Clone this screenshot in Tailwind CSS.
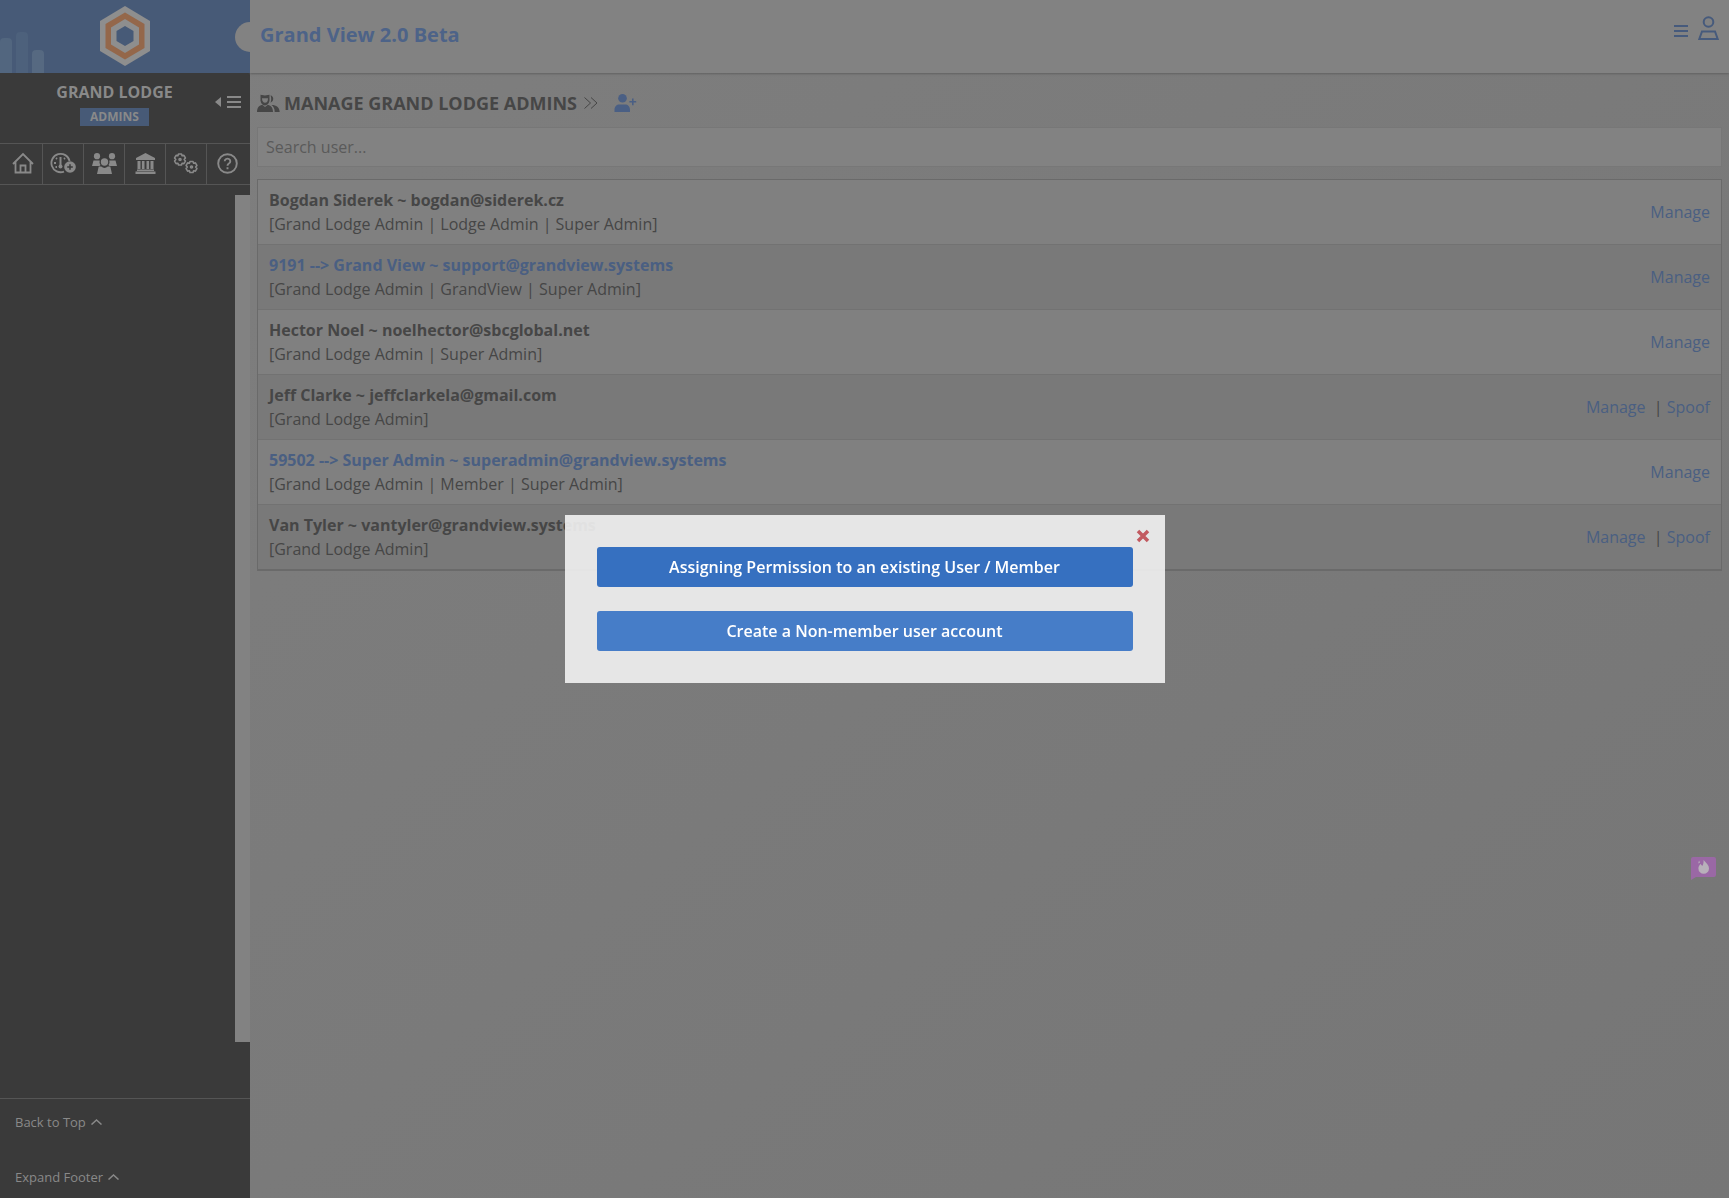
<!DOCTYPE html>
<html lang="en">
<head>
<meta charset="utf-8">
<title>Grand View 2.0 Beta</title>
<script src="https://cdn.jsdelivr.net/npm/@tailwindcss/browser@4"></script>
</head>
<body class="bg-[#7b7b7b] font-['Open_Sans',sans-serif] text-base text-[#464646]">
<div class="flex min-h-screen">
  <aside class="flex w-[250px] shrink-0 flex-col bg-[#3a3a3a] text-[#898989]">
    <div class="relative flex h-[73px] justify-center overflow-hidden bg-[#475a77] pt-[6px]">
      <div class="absolute bottom-0 left-0 flex items-end gap-1" aria-hidden="true">
        <span class="h-[35px] w-3 rounded-t bg-[#52667f]"></span>
        <span class="h-[41px] w-3 rounded-t bg-[#4d617c]"></span>
        <span class="h-[23px] w-3 rounded-t bg-[#566981]"></span>
      </div>
      <svg class="h-[60px] w-[50px]" viewBox="0 0 50 60" fill="none" aria-label="Grand View logo">
        <path d="M25 0 50 15v30L25 60 0 45V15z" fill="#8e8e8e"/>
        <path d="M25 6.500 44.500 18v24L25 53.500 5.500 42V18z" fill="#94674a"/>
        <path d="M25 13 39 21.500v17L25 47 11 38.500v-17z" fill="#8e8e8e"/>
        <path d="M25 20 33.500 25v10L25 40 16.500 35V25z" fill="#475a77"/>
      </svg>
      <span class="absolute top-[22px] -right-[15px] size-[30px] rounded-full bg-[#828282]"></span>
    </div>
    <div class="flex h-[70px] items-center">
      <div class="flex flex-1 flex-col items-center gap-1 pr-0.5 pb-[10px]">
        <p class="leading-6 font-bold">GRAND LODGE</p>
        <p class="bg-[#475a77] px-[10px] text-xs leading-[18px] font-bold">ADMINS</p>
      </div>
      <button class="mr-[9px] mb-3 -ml-4 flex items-center gap-[6px]" aria-label="Collapse menu">
        <svg class="h-[10px] w-[6px]" viewBox="0 0 6 10"><path d="M6 0v10L0 5z" fill="currentColor"/></svg>
        <svg class="h-3 w-[14px]" viewBox="0 0 14 12"><path d="M0 1h14M0 6h14M0 11h14" stroke="currentColor" stroke-width="2"/></svg>
      </button>
    </div>
    <nav class="grid grid-cols-[42px_40px_40px_40px_40px_1fr] gap-px border-y border-[#555] bg-[#555] *:flex *:h-10 *:items-center *:justify-center *:bg-[#3a3a3a] *:pb-0.5">
      <a href="#" aria-label="Home"><svg class="ml-[3px] size-[22px]" viewBox="0 0 22 22" fill="none" stroke="currentColor" stroke-width="1.800"><path d="M1 12 11 2l10 10M3.500 10v10.500h15V10M8.500 20v-6.500h5V20"/></svg></a>
      <a href="#" aria-label="Dashboard"><svg class="h-[22px] w-[26px]" viewBox="0 0 26 22" fill="none" stroke="currentColor" stroke-width="1.800"><path d="M14 19.600A9.200 9.200 0 1 1 19.600 9"/><path d="M10.500 5v8" stroke-width="2"/><circle cx="10.500" cy="14.500" r="2" fill="currentColor" stroke="none"/><path d="M4 11h2M6 6l1 1M15 6l-1 1M5.500 15h1.500" stroke-width="1.800"/><circle cx="20" cy="15" r="5.800" fill="currentColor" stroke="none"/><path d="M20 12.200v5.600M17.200 15h5.600" stroke="#3a3a3a" stroke-width="1.500"/></svg></a>
      <a href="#" aria-label="Members"><svg class="h-[21px] w-[25px]" viewBox="0 0 25 21" fill="currentColor"><circle cx="5" cy="3.200" r="3.100"/><circle cx="20" cy="3.200" r="3.100"/><circle cx="12.500" cy="9" r="3.700"/><path d="M0 13 1.500 7.500h6.200a5 5 0 0 0 .8 4.500l-1 1zM25 13 23.500 7.500h-6.200a5 5 0 0 1-.8 4.500l1 1zM5 21l1.700-7.500h2.500a5 5 0 0 0 6.600 0h2.500L20 21z"/></svg></a>
      <a href="#" aria-label="Lodge"><svg class="size-[21px]" viewBox="0 0 21 21" fill="currentColor"><path d="M10.500 0 20 5v2H1V5zM2.500 8h3v8h-3zM6.900 8h2.600v8H6.900zM11.500 8h2.600v8h-2.600zM15.500 8h3v8h-3zM2 16.500h17V18H2zM.5 18.500h20V21H.5z"/></svg></a>
      <a href="#" aria-label="Settings"><svg class="h-[21px] w-[26px]" viewBox="0 0 26 21" fill="none" stroke="currentColor" stroke-width="1.600" stroke-linejoin="round"><path id="gear" d="M5.500 1h3l.6 1.700 1.800-.3 1.500 2.500L11.200 6.500l1.200 1.600-1.500 2.500-1.800-.3L8.500 12h-3l-.6-1.700-1.800.3L1.600 8.100l1.200-1.600L1.600 4.900l1.500-2.500 1.800.3z"/><circle cx="7" cy="6.500" r="1"/><use href="#gear" x="11.500" y="7.500"/><circle cx="18.500" cy="14" r="1"/></svg></a>
      <a href="#" aria-label="Help"><svg class="mr-[2px] size-[21px]" viewBox="0 0 21 21" fill="none" stroke="currentColor" stroke-width="1.900"><circle cx="10.500" cy="10.500" r="9.300"/><path d="M7.700 8.200a2.800 2.600 0 1 1 4.200 2.300c-1 .6-1.400 1-1.400 2.200M10.500 14.300v2"/></svg></a>
    </nav>
    <div class="mt-[10px] mb-[56px] w-[15px] flex-1 self-end bg-[#828282]"></div>
    <footer class="flex flex-col gap-[31px] border-t border-[#555] px-[15px] pt-[11px] pb-[9px] text-[13px] leading-6">
      <a href="#" class="flex items-center gap-[5px]">Back to Top <svg class="h-[6px] w-[11px]" viewBox="0 0 11 6" fill="none" stroke="currentColor" stroke-width="1.500"><path d="M.5 5.500 5.500 1l5 4.500"/></svg></a>
      <a href="#" class="flex items-center gap-[5px]">Expand Footer <svg class="h-[6px] w-[11px]" viewBox="0 0 11 6" fill="none" stroke="currentColor" stroke-width="1.500"><path d="M.5 5.500 5.500 1l5 4.500"/></svg></a>
    </footer>
  </aside>

  <div class="flex min-w-0 flex-1 flex-col bg-linear-to-br from-[#7e7e7e] to-[#767676]">
    <header class="flex h-[73px] items-start justify-between bg-[#828282] px-[10px] text-[#465a7c] shadow-[0_1px_2px_#606060]">
      <h1 class="mt-[21px] text-xl leading-7 font-bold text-[#4d6388]">Grand View 2.0 Beta</h1>
      <div class="mt-4 flex items-center gap-[10px]">
        <button aria-label="Menu"><svg class="mt-[6px] h-3 w-[14px]" viewBox="0 0 14 12"><path d="M0 1h14M0 6h14M0 11h14" stroke="currentColor" stroke-width="2"/></svg></button>
        <button aria-label="Account"><svg class="h-6 w-[21px]" viewBox="0 0 21 24" fill="none" stroke="currentColor" stroke-width="2"><circle cx="10.500" cy="6" r="4.800"/><path d="M4 15.500h13l2.700 7.500H1.300z"/></svg></button>
      </div>
    </header>
    <main class="px-[7px] pt-[18px]">
      <div class="flex h-6 items-center">
        <svg class="h-[19px] w-[23px]" viewBox="0 0 23 19" fill="#464646"><path d="M3.500.8 8 1.500l4.500-.7v4a4.500 5.500 0 0 1-9 2z"/><path d="M5 4.200h6c0 3-1.200 4.500-3 4.500S5 7 5 4.200z" fill="#7d7d7d"/><path d="M0 18c0-4.500 2.500-7 5.500-7L8 13l2.500-2c3 0 5.500 2.500 5.500 7zM13.500 1.200a4 4 0 0 1 0 7.600c.9-2.500.9-5 0-7.600zM14.500 11c5 0 8 2.500 8.200 7h-5c0-3-1-5.500-3.200-7z"/></svg>
        <h2 class="ml-1 text-lg leading-6 font-bold">MANAGE GRAND LODGE ADMINS</h2>
        <svg class="ml-[7px] h-3 w-[14px]" viewBox="0 0 14 12" fill="none" stroke="#464646"><path d="M.5.500 6.500 6l-6 5.500M7 .5 13 6l-6 5.500"/></svg>
        <button class="ml-4" aria-label="Add admin"><svg class="h-[18px] w-[23px]" viewBox="0 0 23 18" fill="#4a5f84"><circle cx="8.500" cy="4.300" r="4.300"/><path d="M.5 18v-2c0-3.500 2-5.500 5-5.500h5.500c3 0 5 2 5 5.500v2zM18 4.500h1.600V7h2.600v1.600h-2.600v2.600H18V8.600h-2.600V7H18z"/></svg></button>
      </div>
      <input type="text" aria-label="Search user" placeholder="Search user..." class="mt-3 block h-10 w-full border border-[#777] bg-[#828282] px-2 placeholder:text-[#5a5a5a]">
      <table class="mt-3 w-full border-separate border-spacing-0 border border-b-2 border-[#6a6a6a] [&_a]:text-[#4a5f82] [&_strong]:block [&_td]:px-[11px] [&_td]:py-2 [&_td]:leading-6 [&_td:last-child]:text-right [&_tr:nth-child(even)]:bg-[#797979] [&_tr:nth-child(odd)]:bg-[#808080] [&_tr:not(:last-child)>td]:border-b [&_td]:border-[#727272]">
        <tbody>
          <tr><td><strong>Bogdan Siderek ~ bogdan@siderek.cz</strong>[Grand Lodge Admin | Lodge Admin | Super Admin]</td><td><a href="#">Manage</a></td></tr>
          <tr><td><strong class="text-[#4a5f82]">9191 --&gt; Grand View ~ support@grandview.systems</strong>[Grand Lodge Admin | GrandView | Super Admin]</td><td><a href="#">Manage</a></td></tr>
          <tr><td><strong>Hector Noel ~ noelhector@sbcglobal.net</strong>[Grand Lodge Admin | Super Admin]</td><td><a href="#">Manage</a></td></tr>
          <tr><td><strong>Jeff Clarke ~ jeffclarkela@gmail.com</strong>[Grand Lodge Admin]</td><td><a href="#">Manage</a>&nbsp; | <a href="#">Spoof</a></td></tr>
          <tr><td><strong class="text-[#4a5f82]">59502 --&gt; Super Admin ~ superadmin@grandview.systems</strong>[Grand Lodge Admin | Member | Super Admin]</td><td><a href="#">Manage</a></td></tr>
          <tr><td><strong>Van Tyler ~ vantyler@grandview.systems</strong>[Grand Lodge Admin]</td><td><a href="#">Manage</a>&nbsp; | <a href="#">Spoof</a></td></tr>
        </tbody>
      </table>
    </main>
  </div>
</div>

<button class="fixed right-[13px] bottom-[318px]" aria-label="Feedback">
  <svg class="h-[23px] w-[25px]" viewBox="0 0 25 23"><path d="M2 0h21q2 0 2 2v16q0 2-2 2H5l-5 3V2q0-2 2-2z" fill="#9a68a5"/><path d="M12.500 3c3 3 5.500 5.500 5.500 8.500a5.300 5.300 0 0 1-10.600 0C7.400 9.500 8.500 8 9.500 7l1.800 2c1-1.800 1.500-3.500 1.200-6zM8 3.500l1 2-1.800 1z" fill="#b8b0ba"/></svg>
</button>

<div class="fixed inset-0 flex items-center justify-center">
  <div role="dialog" aria-label="Add admin" class="relative flex w-[600px] flex-col gap-6 bg-[#f2f2f2]/90 p-8 font-semibold text-white">
    <button class="absolute top-[14px] right-[15px] text-[#c25a60]" aria-label="Close"><svg class="size-[14px]" viewBox="0 0 14 14" fill="none" stroke="currentColor" stroke-width="3.500"><path d="m2 2 10 10M12 2 2 12"/></svg></button>
    <button class="h-10 rounded-[3px] bg-[#3670c0]">Assigning Permission to an existing User / Member</button>
    <button class="h-10 rounded-[3px] bg-[#467dc8]">Create a Non-member user account</button>
  </div>
</div>
</body>
</html>
